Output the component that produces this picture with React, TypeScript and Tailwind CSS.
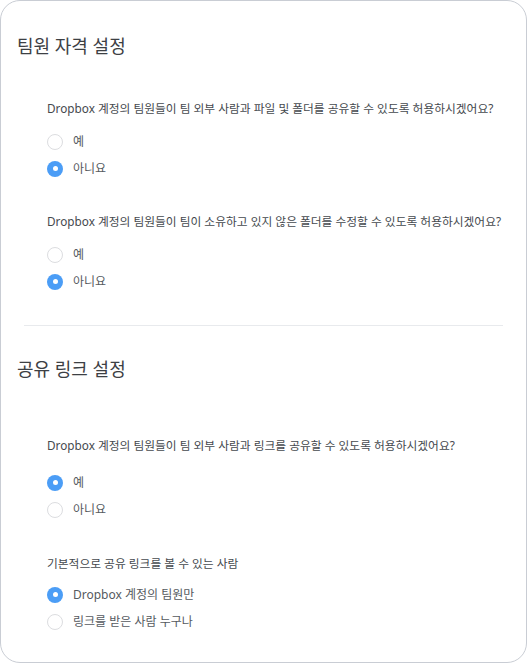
const font = { fontFamily: '"Noto Sans", "Noto Sans CJK KR", sans-serif' };

function Radio({ checked, label }: { checked: boolean; label: string }) {
  return (
    <div className="flex h-[27px] items-center">
      {checked ? (
        <span className="flex h-4 w-4 items-center justify-center rounded-full bg-[#4b9df6]">
          <span className="h-[5px] w-[5px] rounded-full bg-white" />
        </span>
      ) : (
        <span className="h-4 w-4 rounded-full border border-[#dcdde0] bg-white" />
      )}
      <span className="ml-[10px] text-[12px] text-[#555a60]">{label}</span>
    </div>
  );
}

function Question({ text, className }: { text: string; className: string }) {
  return <p className={`h-[18px] text-[11.75px] leading-[18px] text-[#45494e] ${className}`}>{text}</p>;
}

export default function App() {
  return (
    <div style={font} className="h-[664px] w-[527px] bg-white">
      <div className="h-[663px] w-[527px] rounded-[20px] border border-[#c9cdd4] bg-white pt-[33px]">
        <h2 className="ml-[16px] h-[24px] text-[18px] leading-[24px] text-[#3d4044]">팀원 자격 설정</h2>
        <div className="pl-[46px]">
          <Question className="mt-[41px]" text="Dropbox 계정의 팀원들이 팀 외부 사람과 파일 및 폴더를 공유할 수 있도록 허용하시겠어요?" />
          <div className="mt-[11px]">
            <Radio checked={false} label="예" />
            <Radio checked label="아니요" />
          </div>
          <Question className="mt-[30px]" text="Dropbox 계정의 팀원들이 팀이 소유하고 있지 않은 폴더를 수정할 수 있도록 허용하시겠어요?" />
          <div className="mt-[11px]">
            <Radio checked={false} label="예" />
            <Radio checked label="아니요" />
          </div>
        </div>
        <div className="mx-[23px] mt-[30px] h-px bg-[#e8eaed]" />
        <h2 className="ml-[16px] mt-[31px] h-[24px] text-[18px] leading-[24px] text-[#3d4044]">공유 링크 설정</h2>
        <div className="pl-[46px]">
          <Question className="mt-[55px]" text="Dropbox 계정의 팀원들이 팀 외부 사람과 링크를 공유할 수 있도록 허용하시겠어요?" />
          <div className="mt-[15px]">
            <Radio checked label="예" />
            <Radio checked={false} label="아니요" />
          </div>
          <Question className="mt-[31px]" text="기본적으로 공유 링크를 볼 수 있는 사람" />
          <div className="mt-[9px]">
            <Radio checked label="Dropbox 계정의 팀원만" />
            <Radio checked={false} label="링크를 받은 사람 누구나" />
          </div>
        </div>
      </div>
    </div>
  );
}
